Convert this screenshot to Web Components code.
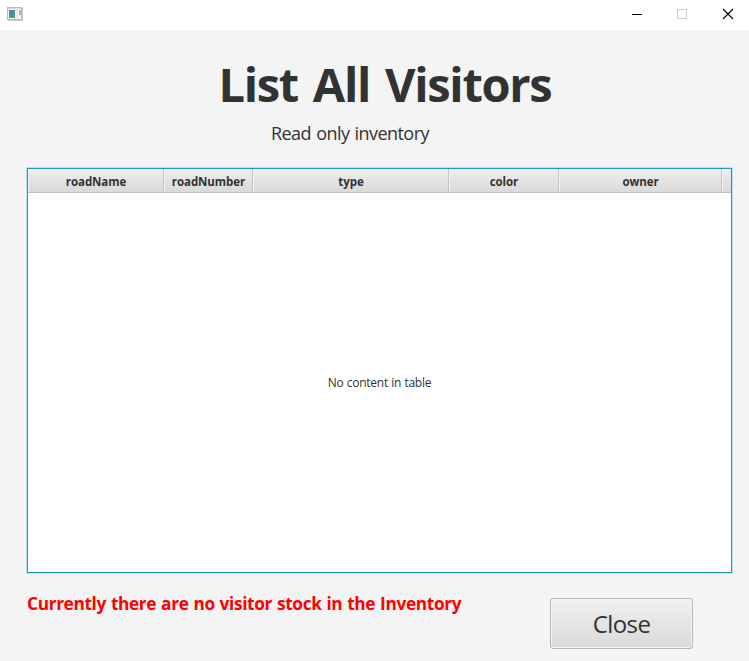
<!DOCTYPE html>
<html lang="en">
<head>
<meta charset="utf-8">
<title>List All Visitors</title>
<style>
html,body{margin:0;height:100%;overflow:hidden}
body{font-family:"Open Sans","Noto Sans",sans-serif;color:#323232;background:#f4f4f4}
</style>
</head>
<body>
<visitor-window></visitor-window>
<script>
const define = (name, html) => customElements.define(name, class extends HTMLElement {
  constructor() {
    super();
    const t = document.createElement('template');
    t.innerHTML = html;
    this.attachShadow({mode: 'open'}).append(t.content.cloneNode(true));
  }
});

define('title-bar', `
<style>
:host{display:flex;justify-content:space-between;height:30px;background:#fff}
svg{display:block}
.app{margin:7px 0 0 7px}
</style>
<svg class="app" width="16" height="14" viewBox="0 0 16 14">
  <defs><linearGradient id="g" x2="1" y2="1"><stop stop-color="#4683a0"/><stop offset="1" stop-color="#57a283"/></linearGradient></defs>
  <rect x=".5" y=".5" width="14" height="12" fill="#f4f6f8" stroke="#b4b9c0"/>
  <path d="M1 1.5h13" stroke="#d5dade"/>
  <rect x="2" y="3" width="6" height="8" fill="url(#g)"/>
  <rect x="9" y="3" width="2" height="8" fill="#e3e6e9"/>
  <rect x="12" y="3" width="2" height="5" fill="#93bdb5"/>
  <path d="M1 13.5h14.5V1" fill="none" stroke="#c8c8cc"/>
</svg>
<svg width="137" height="30" viewBox="0 0 137 30" shape-rendering="crispEdges">
  <rect x="20" y="14" width="10" height="1" fill="#000"/>
  <rect x="65.5" y="9.5" width="9" height="9" fill="none" stroke="#ccc"/>
  <path d="M111 9l10 10M121 9l-10 10" fill="none" stroke="#000" stroke-width="1.1" shape-rendering="auto"/>
</svg>`);

define('table-column', `
<style>
:host{display:flex;align-items:center;justify-content:center;box-sizing:border-box;height:24px;
 font-size:11.5px;font-weight:700;line-height:16px;letter-spacing:-.08px;padding:2px 0 0 1px;white-space:nowrap;
 border-right:1px solid #c4c4c4;border-bottom:1px solid #c0c0c0;
 background:linear-gradient(#efefef,#d9d9d9);box-shadow:inset 1px 1px #f3f3f3}
:host(:last-of-type){border-right:0}
</style><slot></slot>`);

define('visitor-table', `
<style>
:host{display:grid;grid-template-rows:24px 1fr;box-sizing:border-box;width:705px;height:405px;
 background:#fff;border:1px solid #2496b8;box-shadow:0 0 0 1px #b5e3f1}
.head{display:grid;grid-template-columns:136px 89px 196px 110px 163px 1fr}
.body{display:flex;align-items:center;justify-content:center;font-size:12px;line-height:16px;letter-spacing:-.25px;word-spacing:.4px}
</style>
<div class="head"><slot name="column"></slot></div>
<div class="body"><slot></slot></div>`);

define('push-button', `
<style>
:host{display:block}
button{display:block;box-sizing:border-box;width:143px;height:51px;padding:0;border:1px solid #b5b5b5;border-radius:3px;
 background:linear-gradient(#f0f0f0,#d9d9d9);box-shadow:inset 0 0 0 1px #f3f3f3;
 font:400 24px/36px "Open Sans","Noto Sans",sans-serif;color:#323232;letter-spacing:-.6px}
</style><button><slot></slot></button>`);

define('visitor-window', `
<style>
:host{display:flex;flex-direction:column;height:661px;background:#f4f4f4}
h1,p{margin:0;white-space:nowrap}
h1{margin:21px 0 0 218.5px;font-size:47px;line-height:67px;letter-spacing:-1.3px;word-spacing:4px}
.sub{margin:2px 0 0 271px;font-size:18px;line-height:26px;letter-spacing:-.55px;word-spacing:1px}
visitor-table{margin:22px 0 0 27px}
footer{display:flex;justify-content:space-between;padding:25px 56px 0 27px}
.msg{font-size:17.3px;font-weight:700;line-height:24px;color:#f00;margin-top:-6px;letter-spacing:-.36px;word-spacing:.75px}
</style>
<title-bar></title-bar>
<h1>List All Visitors</h1>
<p class="sub">Read only inventory</p>
<visitor-table>
  <table-column slot="column">roadName</table-column>
  <table-column slot="column">roadNumber</table-column>
  <table-column slot="column">type</table-column>
  <table-column slot="column">color</table-column>
  <table-column slot="column">owner</table-column>
  <table-column slot="column"></table-column>
  <span>No content in table</span>
</visitor-table>
<footer><p class="msg">Currently there are no visitor stock in the Inventory</p><push-button>Close</push-button></footer>`);
</script>
</body>
</html>
